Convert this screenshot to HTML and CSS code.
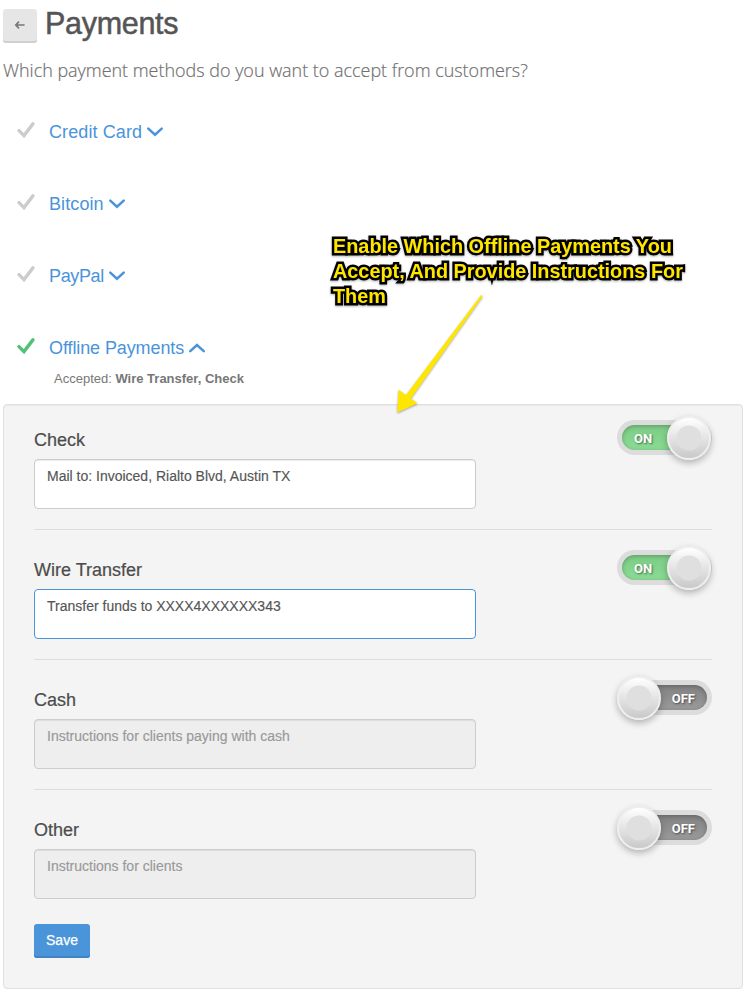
FILE: index.html
```
<!DOCTYPE html>
<html lang="en">
<head>
<meta charset="utf-8">
<title>Payments</title>
<link rel="stylesheet" href="styles.css">
</head>
<body>
<svg class="defs" aria-hidden="true">
  <symbol id="check" viewBox="0 0 18 16"><path d="M2 8.6 7 13.6 15.9 1.9" fill="none" stroke="currentColor" stroke-width="3.4" stroke-linecap="round" stroke-linejoin="miter"/></symbol>
  <symbol id="down" viewBox="0 0 16 10"><path d="M1.3 1.6 8 7.7 14.7 1.6" fill="none" stroke="currentColor" stroke-width="2.5" stroke-linecap="round"/></symbol>
  <symbol id="up" viewBox="0 0 16 10"><path d="M1.3 8.2 8 2 14.7 8.2" fill="none" stroke="currentColor" stroke-width="2.5" stroke-linecap="round"/></symbol>
</svg>
<main class="page">
  <header class="header">
    <a class="back"><svg width="12" height="10" viewBox="0 0 12 10"><path d="M5 1.6 1.8 5 5 8.4M2 5h8.6" fill="none" stroke="currentColor" stroke-width="1.7"/></svg></a>
    <h1 class="title">Payments</h1>
  </header>
  <p class="lead">Which payment methods do you want to accept from customers?</p>
  <ul class="methods">
    <li class="method"><svg class="check"><use href="#check"/></svg><a class="link wide">Credit Card</a><svg class="chevron"><use href="#down"/></svg></li>
    <li class="method"><svg class="check"><use href="#check"/></svg><a class="link wide">Bitcoin</a><svg class="chevron"><use href="#down"/></svg></li>
    <li class="method"><svg class="check"><use href="#check"/></svg><a class="link tight">PayPal</a><svg class="chevron"><use href="#down"/></svg></li>
    <li class="method"><svg class="check enabled"><use href="#check"/></svg><a class="link snug">Offline Payments</a><svg class="chevron"><use href="#up"/></svg></li>
  </ul>
  <p class="accepted">Accepted: <b>Wire Transfer, Check</b></p>
  <section class="panel">
    <div class="row">
      <div class="field"><h2 class="label">Check</h2><div class="input">Mail to: Invoiced, Rialto Blvd, Austin TX</div></div>
      <div class="toggle on"><span class="track">ON</span><span class="knob"></span></div>
    </div>
    <div class="row">
      <div class="field"><h2 class="label">Wire Transfer</h2><div class="input focused">Transfer funds to XXXX4XXXXXX343</div></div>
      <div class="toggle on"><span class="track">ON</span><span class="knob"></span></div>
    </div>
    <div class="row">
      <div class="field"><h2 class="label">Cash</h2><div class="input disabled">Instructions for clients paying with cash</div></div>
      <div class="toggle off"><span class="track">OFF</span><span class="knob"></span></div>
    </div>
    <div class="row">
      <div class="field"><h2 class="label">Other</h2><div class="input disabled">Instructions for clients</div></div>
      <div class="toggle off"><span class="track">OFF</span><span class="knob"></span></div>
    </div>
    <button class="save">Save</button>
  </section>
  <div class="callout">
    <p class="note">Enable Which Offline Payments You<br>Accept, And Provide Instructions For<br>Them</p>
    <svg class="arrow" width="100" height="130" viewBox="0 0 100 130"><path d="M91.2 5 92.8 6.2 20.9 108.4 27.5 113.2 7.3 122.4 8.5 99.8 16 105Z" fill="#ffe600"/></svg>
  </div>
</main>
</body>
</html>
```
FILE: styles.css
```
* { box-sizing: border-box; }
body { margin: 0; background: #fff; color: #555; font-family: "Liberation Sans", Arial, sans-serif; font-size: 14px; }
h1, h2, p, ul { margin: 0; padding: 0; font-weight: normal; }
.defs { display: none; }
.page { position: relative; width: 751px; height: 997px; padding: 9px 8px 0 3px; }
.header { display: flex; height: 34px; }
.back { display: flex; align-items: center; justify-content: center; width: 34px; height: 34px; padding-bottom: 2px; border-radius: 3px; background: #e6e6e6; box-shadow: inset 0 -2px #d0d0d0; color: #777; }
.title { margin: -4px 0 0 8px; font-size: 30.5px; line-height: 36px; letter-spacing: -0.3px; -webkit-text-stroke: 0.5px #555; }
.lead { margin-top: 15px; height: 25px; color: #707070; font: 300 17.95px/25px "Open Sans", sans-serif; white-space: nowrap; -webkit-text-stroke: 0.2px #707070; }
.methods { list-style: none; margin-top: 13px; }
.method { display: flex; align-items: center; height: 72px; padding-left: 14px; color: #4a94da; font-size: 18px; white-space: nowrap; }
.wide { letter-spacing: 0.1px; }
.tight { letter-spacing: -0.35px; }
.snug { letter-spacing: -0.1px; }
.check { width: 18px; height: 16px; margin: -4px 14px 0 0; color: #ccc; }
.enabled { color: #52c077; }
.chevron { width: 16px; height: 10px; margin: 0 0 0 5px; }
.accepted { height: 21px; margin: -16px 0 0 51px; color: #777; font-size: 13px; line-height: 21px; }
.panel { height: 585px; margin-top: 15px; padding: 0 30px; border: 1px solid #e0e0e0; border-radius: 4px; background: #f4f4f4; box-shadow: inset 0 1px 1px rgba(0,0,0,.05); }
.row { display: flex; justify-content: space-between; height: 130px; padding-top: 30px; border-bottom: 1px solid #ddd; }
.row:first-child { height: 125px; padding-top: 25px; }
.row:nth-child(4) { border: 0; }
.label { height: 29px; font-size: 18px; line-height: 20px; color: #4c4c4c; -webkit-text-stroke: 0.2px #4c4c4c; }
.input { width: 442px; height: 50px; padding: 6px 12px; border: 1px solid #ccc; border-radius: 4px; background: #fff; box-shadow: inset 0 1px 1px rgba(0,0,0,.075); line-height: 20px; -webkit-text-stroke: 0.15px; }
.focused { border-color: #4a94da; box-shadow: none; }
.disabled { background: #eee; color: #999; }
.toggle { position: relative; width: 95px; height: 35px; margin-top: -10px; padding: 5px; border-radius: 18px; background: #dcdcdc; }
.track { display: flex; align-items: center; height: 25px; padding: 2px 12px 0; border-radius: 13px; color: #fff; font: bold 13px/23px Roboto, sans-serif; text-shadow: 1px 1px 2px rgba(0,0,0,.5); }
.on .track { background: linear-gradient(#7bcb85, #8bdc95); box-shadow: inset 0 1px 4px rgba(0,0,0,.25); }
.off .track { justify-content: flex-end; background: linear-gradient(#818181, #9b9b9b); box-shadow: inset 0 1px 4px rgba(0,0,0,.25); }
.knob { position: absolute; top: -4px; width: 44px; height: 44px; border: 2px solid #eee; border-radius: 50%; background: radial-gradient(circle, #dfdfdf 0 12px, transparent 13px), linear-gradient(#fff, #c9c9c9); box-shadow: 0 3px 7px rgba(0,0,0,.28); }
.on .knob { right: 1px; }
.off .knob { left: 0; }
.save { display: block; width: 56px; height: 34px; margin-top: 4px; padding: 0 0 2px; border: 0; border-radius: 3px; background: #4a94da; box-shadow: inset 0 -2px #4283c4; color: #fff; font: 14px "Liberation Sans", Arial, sans-serif; -webkit-text-stroke: 0.25px #fff; }
.callout { position: absolute; top: 234px; left: 333px; }
.note { color: #ffe600; font: bold 19.85px/25px "Liberation Sans", Arial, sans-serif; white-space: nowrap; -webkit-text-stroke: 5px #000; paint-order: stroke fill; stroke-linejoin: round; filter: drop-shadow(0 1px 1px rgba(0,0,0,.3)); }
.arrow { position: absolute; top: 56px; left: 57px; filter: drop-shadow(0 1px 1px rgba(0,0,0,.35)); }
```
